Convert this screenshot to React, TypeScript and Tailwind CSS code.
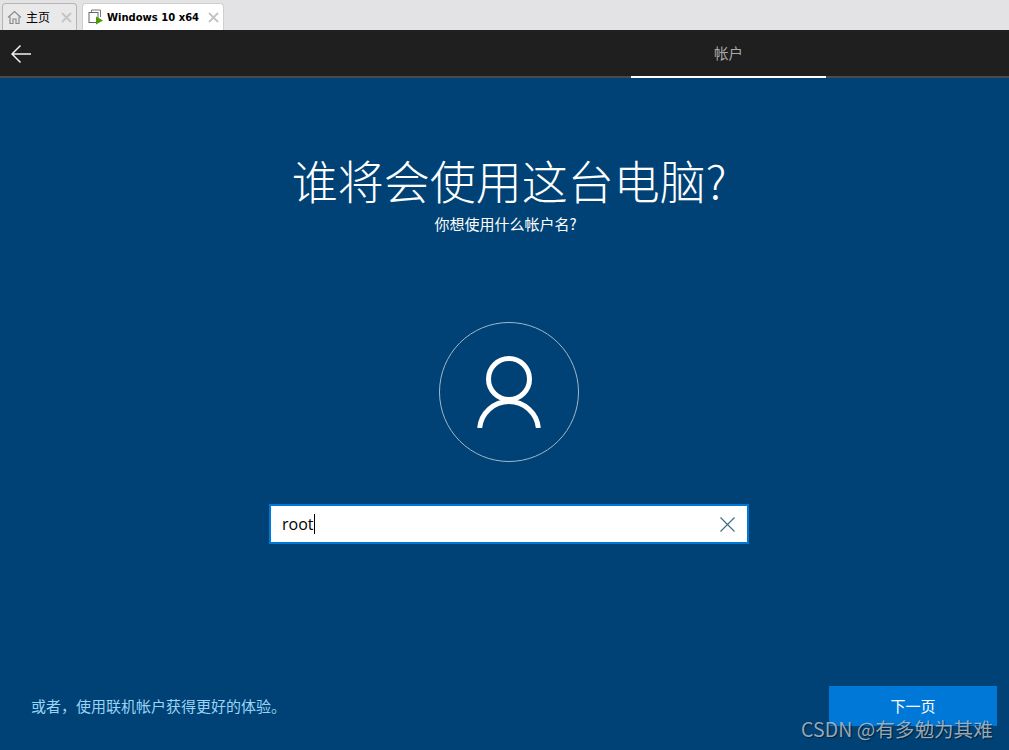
import React from "react";

const cjk = "font-['Noto_Sans_CJK_SC','Liberation_Sans',sans-serif]";

const HomeIcon = () => (
  <svg width="15" height="15" viewBox="0 0 15 15" fill="none" stroke="#8a8a8a" strokeWidth="1.2">
    <path d="M1 7.500 7.500 1.500 14 7.500" />
    <path d="M3 6.500V13.500H6V9H9V13.500H12V6.500" />
  </svg>
);

const VmIcon = () => (
  <svg width="16" height="16" viewBox="0 0 16 16" fill="none">
    <path d="M3.500 3V1H12.500V3" stroke="#777" strokeWidth="1" />
    <path d="M12.500 1V8" stroke="#777" strokeWidth="1" />
    <rect x="1" y="3.500" width="9" height="10" fill="#fff" stroke="#666" strokeWidth="1" />
    <path d="M8 7.500 15 11.500 8 15.500Z" fill="#4e9a06" />
  </svg>
);

const CloseGlyph = ({ color }: { color: string }) => (
  <svg width="11" height="11" viewBox="0 0 11 11" fill="none" stroke={color} strokeWidth="1.8">
    <path d="M1 1 10 10M10 1 1 10" />
  </svg>
);

export default function App() {
  return (
    <div className={`relative w-[1009px] h-[750px] flex flex-col overflow-hidden bg-[#004275] ${cjk}`}>
      {/* vmware tabs */}
      <div className="h-[30px] flex items-end gap-[5px] pl-[2px] bg-[#e3e3e5]">
        <div className="w-[75px] h-[27px] flex items-center pl-[4px] gap-[4px] bg-[#e9e9e9] border border-b-0 border-[#b5b5b5] rounded-t-[4px]">
          <HomeIcon />
          <span className="text-[12px] text-black">主页</span>
          <span className="ml-auto mr-[4px] flex"><CloseGlyph color="#c4c4c4" /></span>
        </div>
        <div className="w-[142px] h-[27px] flex items-center pl-[5px] gap-[3px] bg-white border border-b-0 border-[#d0d0d0] rounded-t-[4px]">
          <VmIcon />
          <span className="text-[10px] font-bold text-black font-['DejaVu_Sans',sans-serif]">Windows 10 x64</span>
          <span className="ml-auto mr-[4px] flex"><CloseGlyph color="#c4c4c4" /></span>
        </div>
      </div>

      {/* oobe nav */}
      <div className="h-[48px] flex justify-between bg-[#1f1f1f] border-b-2 border-[#4a4a4a]">
        <div className="pl-[11px] pt-[14px]">
          <svg width="20" height="20" viewBox="0 0 20 20" fill="none" stroke="#f2f2f2" strokeWidth="1.5">
            <path d="M1 10H20M9.500 1.500 1 10l8.500 8.500" />
          </svg>
        </div>
        <div className="w-[195px] h-[48px] mr-[183px] flex items-center justify-center border-b-2 border-white text-[14.500px] text-[#a9a9a9]">
          帐户
        </div>
      </div>

      {/* main */}
      <div className="flex-1 flex flex-col">
        <div className="pl-[9px] flex flex-col items-center">
          <h1 className="mt-[66px] h-[69px] leading-[70px] text-[46px] font-extralight text-white">谁将会使用这台电脑?</h1>
          <p className="h-[22px] pr-[7px] leading-[22px] text-[15px] text-white">你想使用什么帐户名?</p>
          <div className="mt-[87px] w-[140px] h-[140px] rounded-full border border-[#9fb8cc] flex items-center justify-center">
            <svg width="64" height="72" viewBox="0 0 64 72" fill="none" stroke="#fff" strokeWidth="5">
              <circle cx="32" cy="23" r="20.500" />
              <path d="M2.650 72A29.500 29.500 0 0 1 61.350 72" />
            </svg>
          </div>
          <div className="mt-[42px] w-[480px] h-[40px] flex items-center justify-between pl-[11px] pr-[12px] bg-white border-2 border-[#0078d7]">
            <div className="flex items-center">
              <span className="text-[16px] text-black font-['Open_Sans',sans-serif]">root</span>
              <span className="w-px h-[20px] bg-black"></span>
            </div>
            <svg width="15" height="15" viewBox="0 0 15 15" fill="none" stroke="#3f6f80" strokeWidth="1.200">
              <path d="M.5.5 14.500 14.500M14.500.5.500 14.500" />
            </svg>
          </div>
        </div>
        <div className="mt-auto mb-[24px] w-full flex items-center justify-between pl-[31px] pr-[12px]">
          <span className="text-[15px] text-[#99d3f7]">或者，使用联机帐户获得更好的体验。</span>
          <button type="button" className="w-[168px] h-[40px] bg-[#0078d7] text-white text-[15px]">下一页</button>
        </div>
      </div>

      {/* watermark */}
      <span className="absolute left-[801px] top-[715px] text-[19.600px] leading-[28px] text-[#b4bec8]/85 [text-shadow:1px_1px_1px_rgba(0,0,0,0.5)]">
        CSDN @有多勉为其难
      </span>
    </div>
  );
}
